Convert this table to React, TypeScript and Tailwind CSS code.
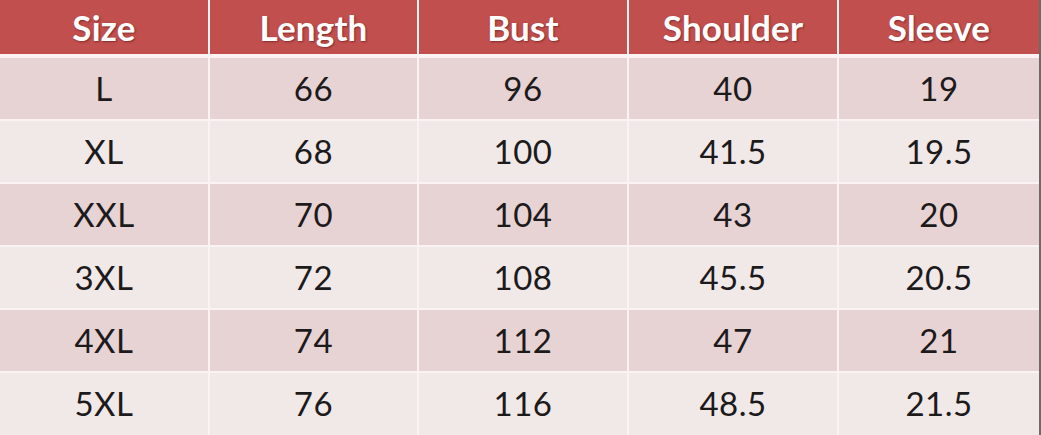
const headers = ["Size", "Length", "Bust", "Shoulder", "Sleeve"];

const rows = [
  ["L", "66", "96", "40", "19"],
  ["XL", "68", "100", "41.5", "19.5"],
  ["XXL", "70", "104", "43", "20"],
  ["3XL", "72", "108", "45.5", "20.5"],
  ["4XL", "74", "112", "47", "21"],
  ["5XL", "76", "116", "48.5", "21.5"],
];

const cols = "grid grid-cols-[208px_207px_208px_208px_1fr] gap-x-[2px]";

export default function App() {
  return (
    <div
      className="w-[1041px] h-[435px] overflow-hidden bg-[#fbf3f3] border-r-2 border-[#6e6a6a] flex flex-col"
      style={{ fontFamily: "Lato, 'Open Sans', sans-serif" }}
    >
      <div className={`${cols} h-[54px] shrink-0`}>
        {headers.map((h) => (
          <div
            key={h}
            className="bg-[#c14f4e] flex items-center justify-center text-white font-bold text-[35px] tracking-[0.2px] [text-shadow:1px_1px_2px_rgba(90,20,20,0.6)]"
          >
            {h}
          </div>
        ))}
      </div>

      <div className="mt-[4px] flex flex-col gap-y-[2px]">
        {rows.map((r, i) => (
          <div key={r[0]} className={`${cols} ${i === rows.length - 1 ? "h-[62px]" : "h-[61px]"}`}>
            {r.map((v, j) => (
              <div
                key={j}
                className={`flex items-center justify-center text-[33px] tracking-[0.5px] text-[#1c1a1b] ${
                  i % 2 === 0 ? "bg-[#e7d2d4]" : "bg-[#f1e8e8]"
                }`}
              >
                {v}
              </div>
            ))}
          </div>
        ))}
      </div>
    </div>
  );
}
